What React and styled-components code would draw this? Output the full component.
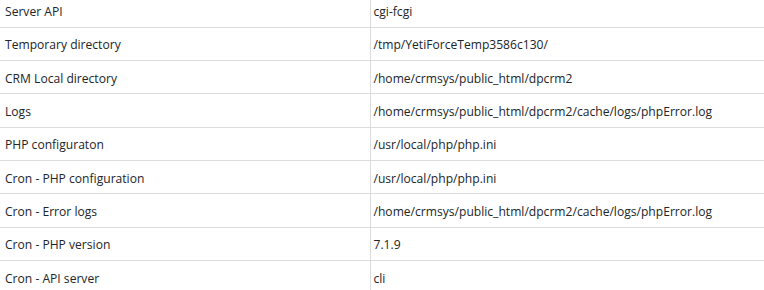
import React from 'react';
import styled, { createGlobalStyle } from 'styled-components';

const GlobalStyle = createGlobalStyle`
  html, body {
    margin: 0;
    padding: 0;
    background: #fff;
    overflow: hidden;
  }
  body {
    font-family: 'Open Sans', 'Noto Sans', sans-serif;
    color: #212529;
  }
`;

const Wrapper = styled.div`
  width: 764px;
  height: 290px;
  overflow: hidden;
`;

const Table = styled.table`
  width: 100%;
  margin-top: -6px;
  border-collapse: collapse;
  table-layout: fixed;
  font-size: 12.1px;
`;

const Row = styled.tr`
  height: 33.33px;
  border-bottom: 1px solid #dcdcdc;
`;

const Cell = styled.td`
  padding: 2px 4px 0 ${(p) => (p.$first ? '5px' : '3px')};
  vertical-align: middle;
  white-space: nowrap;
  width: ${(p) => (p.$first ? '370px' : 'auto')};
  border-right: ${(p) => (p.$first ? '1px solid #dcdcdc' : 'none')};
  box-sizing: border-box;
`;

const rows = [
  ['Server API', 'cgi-fcgi'],
  ['Temporary directory', '/tmp/YetiForceTemp3586c130/'],
  ['CRM Local directory', '/home/crmsys/public_html/dpcrm2'],
  ['Logs', '/home/crmsys/public_html/dpcrm2/cache/logs/phpError.log'],
  ['PHP configuraton', '/usr/local/php/php.ini'],
  ['Cron - PHP configuration', '/usr/local/php/php.ini'],
  ['Cron - Error logs', '/home/crmsys/public_html/dpcrm2/cache/logs/phpError.log'],
  ['Cron - PHP version', '7.1.9'],
  ['Cron - API server', 'cli'],
];

const App = () => (
  <Wrapper>
    <GlobalStyle />
    <Table>
      <tbody>
        {rows.map(([label, value]) => (
          <Row key={label}>
            <Cell $first>{label}</Cell>
            <Cell>{value}</Cell>
          </Row>
        ))}
      </tbody>
    </Table>
  </Wrapper>
);

export default App;
